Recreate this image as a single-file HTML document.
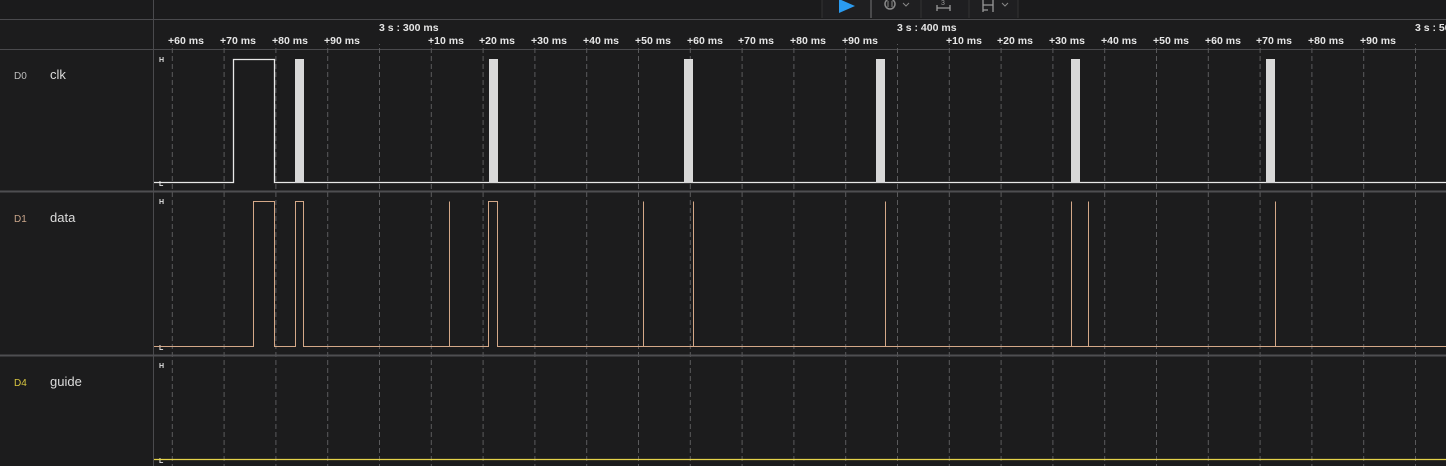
<!DOCTYPE html>
<html><head><style>
html,body{margin:0;padding:0;background:#1c1c1d;width:1446px;height:466px;overflow:hidden;font-family:"Liberation Sans",sans-serif}
svg{position:absolute;left:0;top:0}
</style></head><body>
<svg width="1446" height="466" viewBox="0 0 1446 466" xmlns="http://www.w3.org/2000/svg">
<defs>
<pattern id="g" x="171.8" y="0" width="51.8" height="8" patternUnits="userSpaceOnUse">
<line x1="0.5" y1="0" x2="0.5" y2="5" stroke="#5a5a5c" stroke-width="1"/>
</pattern>
</defs>
<rect width="1446" height="466" fill="#1c1c1d"/>
<rect x="0" y="0" width="1446" height="19" fill="#1b1b1c"/>
<rect x="822" y="0" width="196" height="18" fill="#1f1f21"/>
<line x1="822" y1="0" x2="822" y2="18" stroke="#333" />
<line x1="871" y1="0" x2="871" y2="18" stroke="#4a4a4c" stroke-width="2"/>
<line x1="921" y1="0" x2="921" y2="18" stroke="#333"/>
<line x1="969" y1="0" x2="969" y2="18" stroke="#333"/>
<line x1="1018" y1="0" x2="1018" y2="18" stroke="#333"/>
<polygon points="839,-1 855,6 839,13" fill="#2a9bf0"/>
<circle cx="890" cy="4" r="5" fill="none" stroke="#888" stroke-width="1.5"/>
<path d="M888 1 v6 M892 1 v6" stroke="#888"/>
<path d="M903 3 l3 3 l3 -3" fill="none" stroke="#888"/>
<path d="M937 5 v6 M937 8 h13 M950 5 v6" fill="none" stroke="#999" stroke-width="1.3"/>
<text x="943" y="5" font-size="7" fill="#999" text-anchor="middle">3</text>
<path d="M983 0 v12 M983 5 h10 M993 0 v12 M983 10 h5" fill="none" stroke="#999" stroke-width="1.3"/>
<path d="M1002 3 l3 3 l3 -3" fill="none" stroke="#888"/>
<line x1="0" y1="19.5" x2="1446" y2="19.5" stroke="#4a4a4d"/>
<line x1="0" y1="49.5" x2="1446" y2="49.5" stroke="#4a4a4d"/>
<line x1="153.5" y1="0" x2="153.5" y2="466" stroke="#4a4a4d"/>
<rect x="154" y="44" width="1292" height="422" fill="url(#g)"/>
<g font-size="10.5" font-weight="bold" fill="#e6e6e6">
<text x="168" y="44">+60 ms</text><text x="220" y="44">+70 ms</text><text x="272" y="44">+80 ms</text><text x="324" y="44">+90 ms</text>
<text x="379" y="31">3 s : 300 ms</text>
<text x="428" y="44">+10 ms</text><text x="479" y="44">+20 ms</text><text x="531" y="44">+30 ms</text><text x="583" y="44">+40 ms</text><text x="635" y="44">+50 ms</text><text x="687" y="44">+60 ms</text><text x="738" y="44">+70 ms</text><text x="790" y="44">+80 ms</text><text x="842" y="44">+90 ms</text>
<text x="897" y="31">3 s : 400 ms</text>
<text x="946" y="44">+10 ms</text><text x="997" y="44">+20 ms</text><text x="1049" y="44">+30 ms</text><text x="1101" y="44">+40 ms</text><text x="1153" y="44">+50 ms</text><text x="1205" y="44">+60 ms</text><text x="1256" y="44">+70 ms</text><text x="1308" y="44">+80 ms</text><text x="1360" y="44">+90 ms</text>
<text x="1415" y="31">3 s : 500 ms</text>
</g>
<line x1="0" y1="191.5" x2="1446" y2="191.5" stroke="#4e4e51" stroke-width="2"/>
<line x1="0" y1="355.5" x2="1446" y2="355.5" stroke="#4e4e51" stroke-width="2"/>
<g font-size="10" fill="#bdbdbd">
<text x="14" y="79">D0</text>
<text x="14" y="222" fill="#c9a58a">D1</text>
<text x="14" y="386" fill="#d8c640">D4</text>
</g>
<g font-size="13" fill="#dcdcdc">
<text x="50" y="79">clk</text><text x="50" y="222">data</text><text x="50" y="386">guide</text>
</g>
<g font-size="7" font-weight="bold" fill="#e0e0e0">
<text x="159" y="62">H</text><text x="159" y="186">L</text>
<text x="159" y="204">H</text><text x="159" y="350">L</text>
<text x="159" y="368">H</text><text x="159" y="463">L</text>
</g>
<path d="M154 182.5 H233.5 V59.5 H274.5 V182.5 H1446" fill="none" stroke="#e8e8e8" stroke-width="1.3"/>
<g fill="#d8d8d8">
<rect x="295" y="59" width="9" height="124"/>
<rect x="489" y="59" width="9" height="124"/>
<rect x="684" y="59" width="9" height="124"/>
<rect x="876" y="59" width="9" height="124"/>
<rect x="1071" y="59" width="9" height="124"/>
<rect x="1266" y="59" width="9" height="124"/>
</g>
<path d="M154 346.5 H253.5 V201.5 H274.5 V346.5 H295.5 V201.5 H303.5 V346.5 H449.5 V201.5 V346.5 H488.5 V201.5 H497.5 V346.5 H643.5 V201.5 V346.5 H693.5 V201.5 V346.5 H885.5 V201.5 V346.5 H1071.5 V201.5 V346.5 H1088.5 V201.5 V346.5 H1275.5 V201.5 V346.5 H1446" fill="none" stroke="#d4a888" stroke-width="1.2" shape-rendering="crispEdges"/>
<line x1="154" y1="459.5" x2="1446" y2="459.5" stroke="#e5d34a" stroke-width="1.3"/>
</svg>
</body></html>
